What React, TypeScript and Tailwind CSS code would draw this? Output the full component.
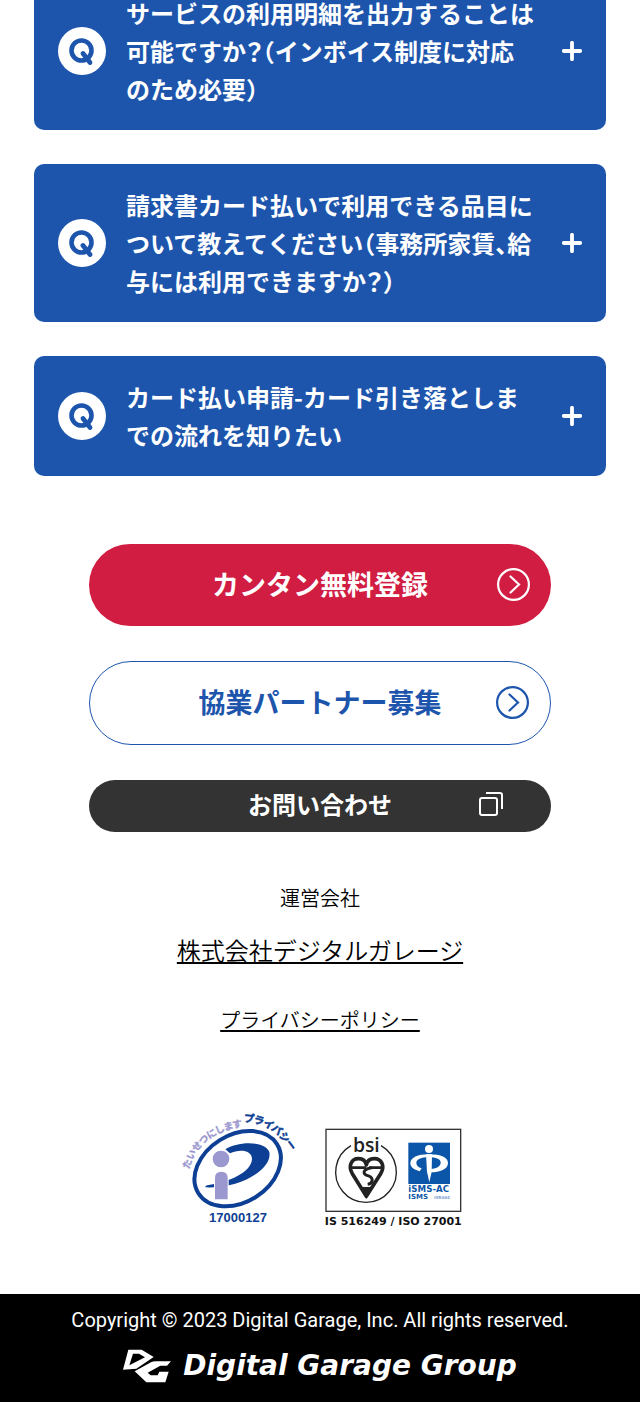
import { Fragment, useState } from "react";

interface Faq {
  id: string;
  question: string;
}

const faqs: Faq[] = [
  {
    id: "invoice",
    question:
      "サービスの利用明細を出力することは可能ですか？（インボイス制度に対応のため必要）",
  },
  {
    id: "items",
    question:
      "請求書カード払いで利用できる品目について教えてください（事務所家賃、給与には利用できますか？）",
  },
  {
    id: "flow",
    question: "カード払い申請-カード引き落としまでの流れを知りたい",
  },
];

function QIcon() {
  return (
    <svg viewBox="0 0 48 48" className="size-12 shrink-0" aria-hidden="true">
      <circle cx="24" cy="24" r="24" fill="#fff" />
      <circle cx="23.5" cy="23.5" r="10" fill="none" stroke="#1d55ad" strokeWidth="4.6" />
      <path d="M25 26.5L32 35.5" stroke="#1d55ad" strokeWidth="4.8" strokeLinecap="round" />
    </svg>
  );
}

function PlusIcon() {
  return (
    <svg viewBox="0 0 20 20" className="size-5 shrink-0" aria-hidden="true">
      <path d="M10 1.8V18.2M1.8 10H18.2" stroke="#fff" strokeWidth="3.8" strokeLinecap="round" />
    </svg>
  );
}

function ArrowIcon() {
  return (
    <svg viewBox="0 0 34 34" className="size-[34px]" fill="none" stroke="currentColor" strokeWidth="2.2" aria-hidden="true">
      <circle cx="16.5" cy="17.5" r="15.4" />
      <path d="M13.5 9.5L22 17.5L13.5 25.5" strokeLinecap="round" />
    </svg>
  );
}

function WindowIcon() {
  return (
    <svg viewBox="0 0 24 24" className="size-6" fill="none" stroke="currentColor" strokeWidth="2" aria-hidden="true">
      <rect x="1" y="6" width="17" height="17" rx="2" />
      <path d="M7 1H21A2 2 0 0 1 23 3V17" />
    </svg>
  );
}

// 句読点や括弧は半角幅、疑問符だけ字幅を詰める
function Question({ text }: { text: string }) {
  return (
    <>
      {text.split("？").map((part, i) => (
        <Fragment key={i}>
          {i > 0 && <span className="[font-feature-settings:'palt']">？</span>}
          {part}
        </Fragment>
      ))}
    </>
  );
}

function PrivacyMark() {
  return (
    <svg viewBox="0 0 420 405" className="h-[135px] w-[140px]" role="img" aria-label="プライバシーマーク 17000127">
      <defs>
        <path id="arc-left" d="M58 208C72 142 136 86 230 80" />
        <path id="arc-right" d="M222 66C276 66 328 92 374 172" />
      </defs>
      <g className="font-['Noto_Sans_CJK_JP',sans-serif] font-bold [font-feature-settings:'palt']">
        <text fontSize="29" fill="#9b97cf" stroke="#9b97cf">
          <textPath href="#arc-left">たいせつにします</textPath>
        </text>
        <text fontSize="31" fill="#0d3f94" stroke="#0d3f94" strokeWidth="1.5">
          <textPath href="#arc-right">プライバシー</textPath>
        </text>
      </g>
      <ellipse cx="203" cy="206" rx="139" ry="101" transform="rotate(-32 203 206)" fill="none" stroke="#0d3f94" strokeWidth="12" />
      <path
        d="M166 148C200 124 284 120 298 156C308 206 214 266 106 262C106 259 108 257 112 256C180 246 244 216 246 178C247 150 208 146 180 160Z"
        fill="#0d3f94"
      />
      <circle cx="153" cy="177" r="28" fill="#fff" />
      <circle cx="153" cy="177" r="25" fill="#9b97cf" />
      <path d="M132 300V233Q132 213 154 213Q176 213 176 233V300Z" fill="#fff" />
      <path d="M135 298V233Q135 215 154 215Q173 215 173 233V298Z" fill="#9b97cf" />
      <text
        x="204"
        y="366"
        textAnchor="middle"
        fontSize="39"
        fill="#0d3f94"
        className="font-['Liberation_Sans',sans-serif] font-bold"
      >
        17000127
      </text>
    </svg>
  );
}

function IsmsMark() {
  return (
    <svg viewBox="0 0 465 360" className="h-[120px] w-[155px]" role="img" aria-label="IS 516249 / ISO 27001">
      <rect x="33" y="43" width="404" height="246" fill="none" stroke="#333" strokeWidth="4" />
      <path d="M198 92A91 91 0 1 1 108 92" fill="none" stroke="#222" strokeWidth="4" />
      <text x="154" y="111" textAnchor="middle" fontSize="58" fill="#222" className="font-['Open_Sans',sans-serif] font-semibold">
        bsi
      </text>
      <g fill="none" stroke="#222" strokeWidth="11" strokeLinejoin="round">
        <path d="M154 244L112 176C98 152 110 131 130 131C144 131 152 138 154 150C156 138 164 131 178 131C198 131 212 152 197 176Z" />
        <path d="M106 158H154M162 158H202" strokeWidth="8" />
        <path d="M170 158C142 162 142 178 158 182C178 188 174 206 158 208" strokeWidth="9" />
      </g>
      <path d="M138 216H170L154 252Z" fill="#222" />
      <rect x="280" y="83" width="125" height="124" fill="#0b56a8" />
      <circle cx="342" cy="102" r="12" fill="#fff" />
      <path
        fillRule="evenodd"
        d="M342 118C378 118 399 128 399 144C399 163 374 172 348 172V162C366 160 377 153 377 143C377 131 362 127 342 127C318 127 304 133 304 144C304 151 310 157 320 160L314 169C296 164 286 156 286 145C286 128 308 118 342 118Z"
        fill="#fff"
      />
      <path d="M333 118H351L350 170L343 202L336 170Z" fill="#fff" />
      <g className="font-['DejaVu_Sans',sans-serif] font-bold" fill="#0b56a8">
        <text x="280" y="231" fontSize="26">iSMS-AC</text>
        <text x="280" y="253" fontSize="21">ISMS</text>
        <text x="357" y="252" fontSize="12" fill="#7d9fd0">ISR004</text>
      </g>
      <text x="235" y="329" textAnchor="middle" fontSize="33" fill="#111" className="font-['DejaVu_Sans',sans-serif] font-bold">
        IS 516249 / ISO 27001
      </text>
    </svg>
  );
}

function GroupMark() {
  return (
    <svg viewBox="12 15 144 98" className="h-[34px] w-12" fill="#fff" aria-hidden="true">
      <path fillRule="evenodd" d="M28 15H68L104 37L52 72L12 75ZM42 27L31 62L78 38L60 27Z" />
      <path d="M156 50L144 63H124L86 84L95 92H116L121 81H149L139 113H82L47 80L96 53Q102 50 110 50Z" />
    </svg>
  );
}

export default function App() {
  const [openId, setOpenId] = useState<string | null>(null);

  return (
    <div className="overflow-hidden bg-white font-['Noto_Sans_CJK_JP',sans-serif] text-black" lang="ja">
      <main className="-mt-7">
        <section className="flex flex-col gap-[34px] px-[34px]">
          {faqs.map((faq) => (
            <button
              key={faq.id}
              type="button"
              aria-expanded={openId === faq.id}
              onClick={() => setOpenId(openId === faq.id ? null : faq.id)}
              className="flex w-full items-center rounded-[10px] bg-[#1d55ad] px-6 py-[22px] text-left text-white"
            >
              <QIcon />
              <span className="ml-5 mr-[26px] flex-1 text-2xl leading-[38px] font-bold [font-feature-settings:'halt']">
                <Question text={faq.question} />
              </span>
              <PlusIcon />
            </button>
          ))}
        </section>

        <section className="mx-auto mt-[68px] flex max-w-[462px] flex-col gap-[35px]">
          <a
            href="#register"
            className="relative flex h-[82px] items-center justify-center rounded-full bg-[#d11d42] pb-[2px] text-[27px] font-bold text-white"
          >
            カンタン無料登録
            <span className="absolute right-5">
              <ArrowIcon />
            </span>
          </a>
          <a
            href="#partner"
            className="relative flex h-[84px] items-center justify-center rounded-full border border-[#1d55ad] pb-[2px] text-[27px] font-bold text-[#1d55ad]"
          >
            協業パートナー募集
            <span className="absolute right-5">
              <ArrowIcon />
            </span>
          </a>
          <a
            href="#contact"
            className="relative flex h-[52px] items-center justify-center rounded-full bg-[#333] pb-1 text-2xl font-bold text-white"
          >
            お問い合わせ
            <span className="absolute right-12">
              <WindowIcon />
            </span>
          </a>
        </section>

        <section className="mt-[50px] flex flex-col items-center font-[350]">
          <p className="text-xl leading-8">運営会社</p>
          <a href="#company" className="mt-4 text-2xl leading-10 underline decoration-2 underline-offset-2">
            株式会社デジタルガレージ
          </a>
          <a href="#privacy" className="mt-[30px] text-xl leading-10 underline decoration-2 underline-offset-2">
            プライバシーポリシー
          </a>
        </section>

        <div className="mt-[60px] flex items-end justify-center gap-[5px] pb-[59px]">
          <PrivacyMark />
          <IsmsMark />
        </div>
      </main>

      <footer className="flex flex-col items-center bg-black pt-3 pb-[14px] text-white">
        <p className="font-['Roboto',sans-serif] text-xl leading-7">
          Copyright © 2023 Digital Garage, Inc. All rights reserved.
        </p>
        <div className="mt-[10px] flex items-center gap-3">
          <GroupMark />
          <span className="font-['DejaVu_Sans',sans-serif] text-[28px] leading-[44px] font-bold italic">
            Digital Garage Group
          </span>
        </div>
      </footer>
    </div>
  );
}
